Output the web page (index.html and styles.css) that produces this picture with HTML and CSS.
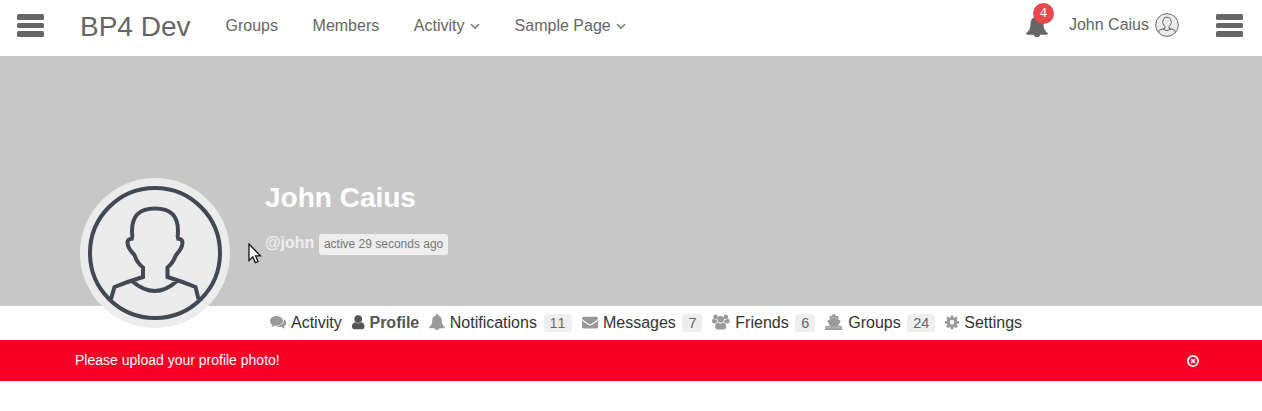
FILE: index.html
```html
<!DOCTYPE html>
<html lang="en">
<head>
<meta charset="utf-8">
<title>John Caius – BP4 Dev</title>
<link rel="stylesheet" href="styles.css">
</head>
<body>
<svg class="defs" width="0" height="0">
  <symbol id="bell" viewBox="0 0 22 22"><path d="M11 0c.9 0 1.500.6 1.500 1.500v.4c3.300.7 5 3.400 5 6.400 0 5.300 1.400 7.800 4.500 10 0 .8-.7 1.400-1.500 1.400h-6.400c0 1.500-1.400 2.300-3.100 2.300s-3.100-.8-3.100-2.300H1.500C.7 19.700 0 19.100 0 18.300c3.100-2.200 4.500-4.700 4.500-10 0-3 1.700-5.700 5-6.400v-.4C9.500.6 10.100 0 11 0z"/></symbol>
  <symbol id="avatar" viewBox="0 0 150 150">
    <circle cx="75" cy="75" r="75" fill="#ececec"/>
    <g fill="none" stroke="#424854" stroke-width="4">
      <circle cx="75" cy="75" r="65"/>
      <path d="M31 121L34.500 109Q48 103.500 63 99V89.500Q57 85 54.500 77Q47.500 70 47.500 64.500Q47.500 60.500 53.500 60.500Q52 60 52 53C52 38 59 30.500 75 30.500S98 38 98 53Q98 60 96.500 60.500Q102.500 60.500 102.500 64.500Q102.500 70 96 77Q93 85 87.500 89.500V99Q102 103.500 115.500 109L118.500 121M52 103Q75 123 97 103"/>
    </g>
  </symbol>
</svg>

<header class="topbar">
  <button class="menu" aria-label="Open menu"><i></i><i></i><i></i></button>
  <a class="brand">BP4 Dev</a>
  <nav class="main-nav">
    <a>Groups</a>
    <a>Members</a>
    <a>Activity <svg class="chevron" viewBox="0 0 10 7"><path d="M1 1.200l4 4 4-4"/></svg></a>
    <a>Sample Page <svg class="chevron" viewBox="0 0 10 7"><path d="M1 1.200l4 4 4-4"/></svg></a>
  </nav>
  <div class="alerts"><svg class="alert-bell"><use href="#bell"/></svg><span class="bubble">4</span></div>
  <a class="account">John Caius <svg class="mini" viewBox="0 0 24 24"><circle cx="12" cy="12" r="12" fill="#ececec"/><g fill="none" stroke="#5d626c"><circle cx="12" cy="12" r="11.300" stroke-width=".9"/><path stroke-width="1" d="M3.500 19.500l.8-2.300 5.700-2v-1.700c-1-1-1.400-1.800-1.700-2.700-.8-.6-1-1.600-.7-2.200l.5-.2C7.900 5.600 9.400 4.200 12 4.200s4.100 1.400 3.900 4.200l.5.200c.3.600.1 1.600-.7 2.200-.3.900-.7 1.700-1.700 2.700v1.700l5.700 2 .8 2.300M8 16.100q4 3 8 0"/></g></svg></a>
  <button class="menu menu-right" aria-label="Open sidebar"><i></i><i></i><i></i></button>
</header>

<section class="cover">
  <svg class="photo"><use href="#avatar"/></svg>
  <div class="identity">
    <h1>John Caius</h1>
    <p><b>@john</b><span class="seen">active 29 seconds ago</span></p>
  </div>
  <svg class="pointer" viewBox="0 0 14 21"><path d="M1 1v16.500l3.800-3.600 2.600 5.700 2.700-1.200-2.500-5.500h4.900z"/></svg>
</section>

<nav class="tabs">
  <a><svg class="w21" viewBox="0 0 21 18"><path d="M6.500 2C2.900 2 0 4.200 0 7c0 1.600 1 3 2.500 3.900-.2.800-.7 1.400-1.300 2 1.500-.1 2.700-.7 3.600-1.400l1.700.2c3.600 0 6.500-2.100 6.500-4.700S10.100 2 6.500 2z"/><path d="M14 5.200c1.300.8 2.300 2.100 2.300 3.700 0 1.600-.9 2.700-2.300 3.500.2.800.7 1.400 1.300 2-1.500-.1-2.700-.7-3.600-1.400-2.300.4-4.200-.1-5.500-1 4.400 0 8-2.200 7.800-6.800z"/></svg>Activity</a>
  <a class="current"><svg class="w18" viewBox="0 0 18 18"><circle cx="6.300" cy="5" r="3.900"/><path d="M3.400 8.300C1 8.600 0 10.400 0 12.900c0 1.500 1 2.300 2.400 2.300h7.800c1.400 0 2.400-.8 2.400-2.300 0-2.500-1-4.300-3.400-4.600-1.700 1.500-4.100 1.500-5.800 0z"/></svg>Profile</a>
  <a><svg class="w20" viewBox="0 0 20.500 18"><use href="#bell" x="0" y="0" width="16" height="16"/></svg>Notifications<span class="count">11</span></a>
  <a><svg class="w21 mail" viewBox="0 0 21 18"><path d="M0 4.300Q0 2.800 1.500 2.800h13q1.500 0 1.500 1.500 0 1.100-1.300 2L9.500 9.800Q8 10.800 6.500 9.800L1.300 6.300Q0 5.300 0 4.300zM0 6.700l6 4.100q2 1.300 4 0l6-4.100v6.400q0 1.400-1.500 1.400h-13Q0 14.500 0 13.100z"/></svg>Messages<span class="count">7</span></a>
  <a><svg class="w22 people" viewBox="0 0 22.500 18"><circle cx="3.500" cy="2.900" r="2.300"/><circle cx="13.800" cy="2.900" r="2.300"/><circle cx="8.700" cy="5.300" r="3.300"/><path d="M1.400 4.800q2 1.400 3.300.6 0 1.700 1 2.900-1.800 0-2.600 1.100H2Q0 9.400 0 7.600q0-2.500 1.400-2.800zM16 4.800q-2 1.400-3.300.6 0 1.700-1 2.900 1.700 0 2.500 1.100h1.400q2 0 2-1.800 0-2.500-1.600-2.800zM6 8.600q2.700 2 5.400 0c2 .3 2.800 2.300 2.800 4.400 0 1.600-.9 2.500-2.300 2.500H5.500c-1.400 0-2.300-.9-2.300-2.500 0-2.100.8-4.100 2.800-4.400z"/></svg>Friends<span class="count">6</span></a>
  <a><svg class="w22 ship" viewBox="0 0 22.500 18"><path d="M7.200.5h3.400V2h2.600v3.500l2 1q.6.300.2.900l-1.900 3.400v1.300h-9v-1.300L2.600 7.400q-.4-.6.200-.9l1.900-1V2h2.500z"/><path d="M5.800 3.400v1.400L9 3.900l3.200.9V3.400z" fill="#c4c4c4"/><path d="M0 12.600l1.500-.9 1.600.9 1.600-.9 1.600.9 1.500-.9 1.600.9 1.500-.9 1.600.9 1.500-.9 1.600.9 1.500-.9v4.200H0z"/><path d="M0 14.300l1.500-.9 1.600.9 1.600-.9 1.600.9 1.500-.9 1.600.9 1.500-.9 1.600.9 1.500-.9 1.600.9 1.500-.9" fill="none" stroke="#ddd" stroke-width=".6"/></svg>Groups<span class="count">24</span></a>
  <a><svg class="w19" viewBox="0 0 19 18"><g fill="none" stroke="#999"><circle cx="7" cy="8.300" r="3.800" stroke-width="3.100"/><path stroke-width="2.700" d="M7 1.400v3M7 12.200v3M.1 8.300h3M10.900 8.300h3M2.100 3.400l2 2M9.900 11.200l2 2M2.100 13.200l2-2M9.900 5.400l2-2"/></g></svg>Settings</a>
</nav>

<div class="notice">
  <span>Please upload your profile photo!</span>
  <svg class="close" viewBox="0 0 12 12"><circle cx="6" cy="6" r="5.100"/><path d="M4.100 4.100l3.800 3.800M7.900 4.100L4.100 7.900"/></svg>
</div>
</body>
</html>
```

FILE: styles.css
```css
* { box-sizing: border-box; }
body {
  margin: 0;
  background: #fff;
  color: #333;
  font: 16px/24px "Liberation Sans", Arial, sans-serif;
}
svg { display: block; flex: none; }
.defs { position: absolute; }

.topbar {
  display: flex;
  align-items: flex-start;
  height: 56px;
  padding: 0 19px 0 17px;
  color: #666;
}
.menu {
  display: flex;
  flex-direction: column;
  gap: 3px;
  width: 27px;
  margin: 14px 0 0;
  padding: 0;
  border: 0;
  background: none;
}
.menu i { width: 27px; height: 5.700px; border-radius: 1.500px; background: #666; }
.brand { margin: 11px 0 0 36px; font-size: 28px; line-height: 32px; white-space: nowrap; }
.main-nav { display: flex; gap: 34.600px; margin: 14px 0 0 35px; }
.main-nav a { display: flex; align-items: center; gap: 5.500px; white-space: nowrap; }
.chevron { width: 10px; height: 7px; fill: none; stroke: #777; stroke-width: 1.500; }
.alerts { position: relative; width: 22px; margin: 15px 0 0 auto; }
.alert-bell { width: 22px; height: 22px; fill: #666; }
.bubble {
  position: absolute;
  left: 7px;
  top: -12px;
  width: 21px;
  height: 21px;
  border-radius: 50%;
  background: #e9484f;
  color: #fff;
  font: 12px/20px "DejaVu Sans", sans-serif;
  text-align: center;
}
.account { display: flex; gap: 6px; margin: 13px 0 0 21px; white-space: nowrap; }
.mini { width: 24px; height: 24px; }
.menu-right { margin-left: 37px; }

.cover {
  position: relative;
  display: flex;
  height: 250px;
  padding: 122px 80px 0;
  background: #c7c7c7;
}
.photo { width: 150px; height: 150px; }
.identity { margin-left: 35px; }
.identity h1 { margin: 3px 0 0; color: #fff; font-size: 28px; line-height: 34px; }
.identity p { display: flex; gap: 5px; margin: 19px 0 0; line-height: 18px; }
.identity b { color: #eee; }
.seen {
  height: 21px;
  padding: 0 4.500px;
  border-radius: 3px;
  background: #eee;
  color: #777;
  font-size: 12px;
  line-height: 20px;
}
.pointer {
  position: absolute;
  left: 248px;
  top: 187px;
  width: 14px;
  height: 21px;
  fill: #fff;
  stroke: #111;
  stroke-width: 1.300;
}

.tabs { display: flex; gap: 10px; height: 34px; padding: 8px 0 0 270px; }
.tabs a { display: flex; height: 18px; line-height: 18px; white-space: nowrap; }
.tabs svg { height: 18px; fill: #999; }
.tabs .current { color: #555; font-weight: bold; }
.tabs .current svg { fill: #555; }
.w18 { width: 17.800px; }
.w19 { width: 19px; }
.w20 { width: 20.500px; }
.w21 { width: 21px; }
.w22 { width: 22.500px; }
.mail, .people, .ship { margin-right: .4px; }
.count {
  height: 18px;
  margin-left: 6.600px;
  padding: 0 6px;
  border-radius: 3px;
  background: #eee;
  color: #666;
  font-size: 14.400px;
  font-kerning: none;
}

.notice {
  display: flex;
  align-items: center;
  justify-content: space-between;
  height: 41px;
  padding: 0 63px 0 75px;
  background: #f80025;
  color: #fff;
  font-size: 14px;
}
.notice span { margin-top: -1px; }
.close { width: 12px; height: 12px; fill: none; stroke: #fff; stroke-width: 1.700; }
```
